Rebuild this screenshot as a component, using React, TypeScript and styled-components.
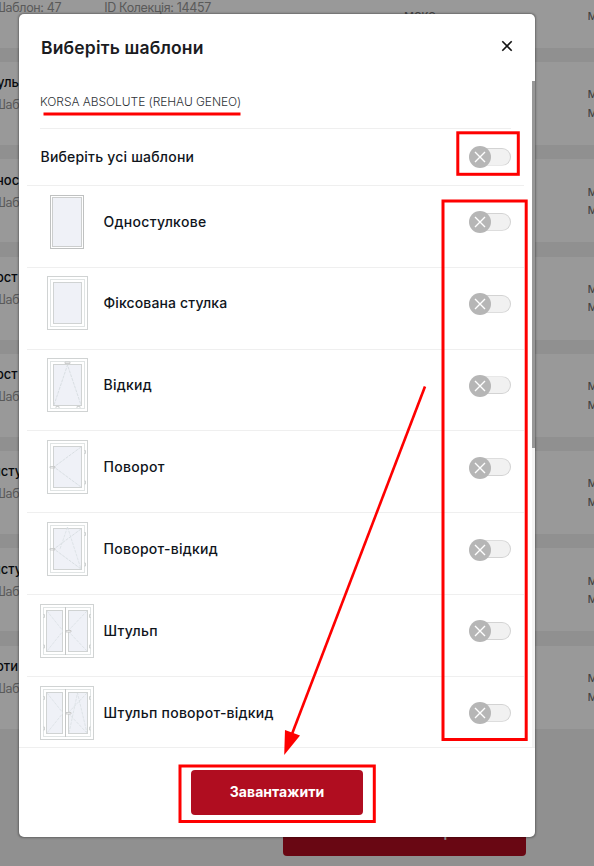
import React from "react";
import styled, { createGlobalStyle } from "styled-components";

const GlobalStyle = createGlobalStyle`
  * { box-sizing: border-box; }
  body { margin: 0; background: #f0f0f0; overflow: hidden; }
  body, button { font-family: Inter, "Noto Sans", sans-serif; }
`;

const Page = styled.div`
  position: relative;
  width: 594px;
  height: 866px;
  overflow: hidden;
  background: #f0f0f0;
`;

const CardList = styled.div`
  display: flex;
  flex-direction: column;
  gap: 14.3px;
  margin-top: -35.4px;
`;

const Card = styled.div`
  display: flex;
  justify-content: space-between;
  height: 83px;
  padding-top: 11.4px;
  background: #fff;
`;

const CardInfo = styled.div`
  margin-left: -3px;
  white-space: nowrap;
`;

const CardTitle = styled.div<{ $shift: number }>`
  height: 19px;
  margin-left: ${(p) => p.$shift}px;
  font-size: 13px;
  line-height: 19px;
  font-weight: 500;
  color: #0c1016;
`;

const CardMeta = styled.div`
  display: flex;
  gap: 43px;
  margin-left: -3px;
  font-size: 12.5px;
  line-height: 25px;
  letter-spacing: -0.35px;
  color: #969696;
`;

const CardStats = styled.div`
  display: flex;
  flex-direction: column;
  width: 6.5px;
  padding-top: 11px;
  font-size: 13px;
  line-height: 18.5px;
  color: #707070;
  overflow: hidden;
`;

const Stat = styled.span`
  height: 18.5px;
`;

const CardCenter = styled.div`
  flex: 1;
  padding: 29px 0 0 193px;
  font-size: 13px;
  line-height: 20px;
  color: #777;
`;

const PageButton = styled.div`
  width: 243px;
  height: 45px;
  margin: 82.5px 0 0 283px;
  border-radius: 4px;
  background: #b00d20;
  color: #fff;
  font-size: 14px;
  font-weight: 600;
  line-height: 41px;
  letter-spacing: -0.6px;
  text-align: center;
`;

const Backdrop = styled.div`
  position: absolute;
  inset: 0;
  padding: 14px 59px 29px 19px;
  background: rgba(0, 0, 0, 0.4);
`;

const Dialog = styled.div`
  display: flex;
  flex-direction: column;
  width: 516px;
  height: 823px;
  border-radius: 5px;
  background: #fff;
  box-shadow: 0 0 2px 0.5px rgba(0, 0, 0, 0.3);
  overflow: hidden;
`;

const Header = styled.div`
  display: flex;
  justify-content: space-between;
  align-items: center;
  height: 67px;
  padding: 0 22px;
`;

const Title = styled.h2`
  margin: 0;
  font-size: 17.5px;
  font-weight: 600;
  line-height: 24px;
  letter-spacing: 0.16px;
  color: #1b1c1f;
`;

const CloseIcon = styled.svg`
  width: 12px;
  height: 12px;
  margin-top: -3px;
`;

const Body = styled.div`
  display: flex;
  height: 666px;
  overflow: hidden;
`;

const Content = styled.div`
  width: 513px;
  padding-left: 8px;
`;

const Scrollbar = styled.div`
  width: 3px;
  background: #f4f4f4;
`;

const Thumb = styled.div`
  height: 367px;
  background: #979797;
`;

const Collection = styled.div`
  height: 48px;
  margin: 0 21px 0 13px;
  padding-top: 11px;
  border-bottom: 1px solid #efefef;
  font-size: 12px;
  line-height: 20px;
  font-weight: 300;
  color: #2f3338;
`;

const Spaced = styled.span<{ $spacing: number }>`
  letter-spacing: ${(p) => p.$spacing}px;
  white-space: nowrap;
`;

const SelectAll = styled.div`
  display: flex;
  justify-content: space-between;
  align-items: center;
  width: 497px;
  height: 57px;
  padding: 0 13px 0 13.5px;
  border-bottom: 1px solid #efefef;
`;

const SelectAllLabel = styled.div`
  padding-bottom: 2px;
`;

const Row = styled.div`
  display: flex;
  align-items: flex-start;
  width: 497px;
  height: 81.84px;
  padding: 8.65px 13px 0;
  border-bottom: 1px solid #efefef;
`;

const RowLabel = styled.div`
  flex: 1;
  padding-left: 9.5px;
  line-height: 53.3px;
`;

const Label = styled(Spaced)`
  font-size: 14px;
  font-weight: 500;
  color: #10151c;
`;

const ToggleSlot = styled.div`
  display: flex;
  align-items: center;
  height: 55.4px;
`;

const Switch = styled.div`
  display: flex;
  align-items: center;
  width: 42px;
  height: 22px;
`;

const Knob = styled.div`
  display: grid;
  place-items: center;
  flex: none;
  z-index: 1;
  width: 22px;
  height: 22px;
  border-radius: 50%;
  background: #b6b6b6;
`;

const Track = styled.div`
  width: 32px;
  height: 18px;
  margin: -1px 0 0 -12px;
  border: 1px solid #d3d3d3;
  border-left: 0;
  border-radius: 0 9px 9px 0;
  background: #f1f1f1;
  clip-path: inset(0 0 0 6px);
`;

const Footer = styled.div`
  display: flex;
  flex: 1;
  justify-content: center;
  align-items: flex-start;
  padding-top: 22px;
  border-top: 1px solid #efefef;
`;

const Submit = styled.button`
  width: 172px;
  height: 45px;
  padding: 0 0 2px;
  border: 0;
  border-radius: 4px;
  background: #b00d20;
  color: #fff;
  font-size: 14px;
  font-weight: 700;
  letter-spacing: 0.05px;
`;

const Marks = styled.svg`
  position: absolute;
  inset: 0;
  pointer-events: none;
`;

function Toggle() {
  return (
    <Switch>
      <Knob>
        <svg width="12" height="12" viewBox="0 0 12 12">
          <path d="M1 1 L11 11 M11 1 L1 11" stroke="#fff" strokeWidth="1.4" />
        </svg>
      </Knob>
      <Track />
    </Switch>
  );
}

type Kind = "single" | "fixed" | "tilt" | "turn" | "tiltTurn" | "double" | "doubleTilt";

function WindowIcon({ kind }: { kind: Kind }) {
  const glass = "#eff1f7";
  const edge = "#d0d3d3";
  const fine = "#e0e4e4";
  const opening = "#d9dfe3";
  if (kind === "single") {
    return (
      <svg width="54" height="54" fill="none">
        <rect x="10.5" y="0.5" width="33" height="53" stroke="#bfc1c1" />
        <rect x="12.5" y="2.5" width="29" height="49" fill={glass} stroke="#cccece" />
      </svg>
    );
  }
  if (kind === "double" || kind === "doubleTilt") {
    return (
      <svg width="54" height="54" fill="none">
        <rect x="0.5" y="0.5" width="53" height="53" stroke={edge} />
        <rect x="3.5" y="3.5" width="47" height="47" stroke={fine} />
        <rect x="6.5" y="6.5" width="16" height="41" fill={glass} stroke={edge} />
        <rect x="28.5" y="6.5" width="19" height="41" fill={glass} stroke={edge} />
        <path d="M25.5 3V51" stroke="#c4c6c6" />
        <path d="M7 7L23 27L7 47" stroke={opening} strokeWidth="0.8" strokeDasharray="3 1" />
        <path d="M47 7L28 27L47 47" stroke={opening} strokeWidth="0.8" strokeDasharray="3 1" />
        {kind === "doubleTilt" && (
          <path d="M29 47L37.5 7L47 47" stroke={opening} strokeWidth="0.8" strokeDasharray="3 1" />
        )}
        <path d="M26 26.5h5v1.5h-5z" fill="#fff" stroke="#c0c2c2" strokeWidth="0.8" />
        <path d="M3 10.5h1.5v3H3 M3 41h1.5v3H3 M51 10.5h-1.5v3H51 M51 41h-1.5v3H51" stroke={edge} />
      </svg>
    );
  }
  return (
    <svg width="54" height="54" fill="none">
      <rect x="7.5" y="0.5" width="40" height="53" stroke={edge} />
      <rect x="10.5" y="3.5" width="34" height="47" stroke={fine} />
      <rect x="13.5" y="6.5" width="28" height="41" fill={glass} stroke={edge} />
      {kind === "tilt" && (
        <>
          <path d="M14 47L27.5 7L41 47" stroke={opening} strokeDasharray="3 1" />
          <path d="M25 4h5v1.5h-5z" stroke="#c1c3c3" strokeWidth="0.8" />
          <path d="M16 50v-1.5h3v1.5 M37 50v-1.5h3v1.5" stroke={edge} />
        </>
      )}
      {(kind === "turn" || kind === "tiltTurn") && (
        <>
          <path d="M41 7L14 27L41 47" stroke={opening} strokeDasharray="3 1" />
          <path d="M10 26.5h5v1.5h-5z" stroke="#c5c7c7" strokeWidth="0.8" />
          <path d="M44 10.5h1.5v3H44 M44 41h1.5v3H44" stroke={edge} />
        </>
      )}
      {kind === "tiltTurn" && (
        <path d="M27.5 5L41 47M27.5 5L20 27" stroke={opening} strokeWidth="0.8" strokeDasharray="3 1" />
      )}
    </svg>
  );
}

const templates: { name: string; kind: Kind; spacing: number }[] = [
  { name: "Одностулкове", kind: "single", spacing: 0.3 },
  { name: "Фіксована стулка", kind: "fixed", spacing: 0.14 },
  { name: "Відкид", kind: "tilt", spacing: 0.25 },
  { name: "Поворот", kind: "turn", spacing: 0.3 },
  { name: "Поворот-відкид", kind: "tiltTurn", spacing: 0.27 },
  { name: "Штульп", kind: "double", spacing: 0.3 },
  { name: "Штульп поворот-відкид", kind: "doubleTilt", spacing: 0.25 },
];

const cards = [
  { title: "", shift: 0, stats: ["", "м"], collection: "ID Колекція: 14457", center: "мске" },
  { title: "уль", shift: 0, stats: ["м", "м"] },
  { title: "нос", shift: -1, stats: ["м", "м"] },
  { title: "ост", shift: -1, stats: ["м", "м"] },
  { title: "ост", shift: -1, stats: ["м", "м"] },
  { title: "исту", shift: -4, stats: ["м", "м"] },
  { title: "исту", shift: -4, stats: ["м", "м"] },
  { title: "оти", shift: -1, stats: ["м", "м"] },
];

export default function App() {
  return (
    <>
      <GlobalStyle />
      <Page>
        <CardList>
          {cards.map((card, i) => (
            <Card key={i}>
              <CardInfo>
                <CardTitle $shift={card.shift}>{card.title}</CardTitle>
                <CardMeta>
                  <span>Шаблон: 47</span>
                  {card.collection && <span>{card.collection}</span>}
                </CardMeta>
              </CardInfo>
              {card.center && <CardCenter>{card.center}</CardCenter>}
              <CardStats>
                {card.stats.map((s, n) => (
                  <Stat key={n}>{s}</Stat>
                ))}
              </CardStats>
            </Card>
          ))}
        </CardList>
        <PageButton>Завантажити обрані</PageButton>
        <Backdrop>
          <Dialog>
            <Header>
              <Title>Виберіть шаблони</Title>
              <CloseIcon viewBox="0 0 12 12">
                <path d="M1.3 1.3L10.7 10.7M10.7 1.3L1.3 10.7" stroke="#151515" strokeWidth="1.6" />
              </CloseIcon>
            </Header>
            <Body>
              <Content>
                <Collection>
                  <Spaced $spacing={-0.06}>KORSA ABSOLUTE (REHAU GENEO)</Spaced>
                </Collection>
                <SelectAll>
                  <SelectAllLabel>
                    <Label $spacing={0.2}>Виберіть усі шаблони</Label>
                  </SelectAllLabel>
                  <Toggle />
                </SelectAll>
                {templates.map((t) => (
                  <Row key={t.name}>
                    <WindowIcon kind={t.kind} />
                    <RowLabel>
                      <Label $spacing={t.spacing}>{t.name}</Label>
                    </RowLabel>
                    <ToggleSlot>
                      <Toggle />
                    </ToggleSlot>
                  </Row>
                ))}
              </Content>
              <Scrollbar>
                <Thumb />
              </Scrollbar>
            </Body>
            <Footer>
              <Submit>Завантажити</Submit>
            </Footer>
          </Dialog>
        </Backdrop>
        <Marks width="594" height="866" fill="none" stroke="#fe0000" strokeWidth="3">
          <path d="M43.5 114H240.5" />
          <rect x="457.8" y="132.8" width="60.5" height="41.5" />
          <rect x="443" y="201" width="83.2" height="538.5" />
          <rect x="180" y="766" width="194.3" height="55.5" />
          <path d="M425 386.5L292 734" strokeWidth="2.6" />
          <path d="M284.2 755L285 730L300 735.5Z" fill="#fe0000" stroke="none" />
        </Marks>
      </Page>
    </>
  );
}
